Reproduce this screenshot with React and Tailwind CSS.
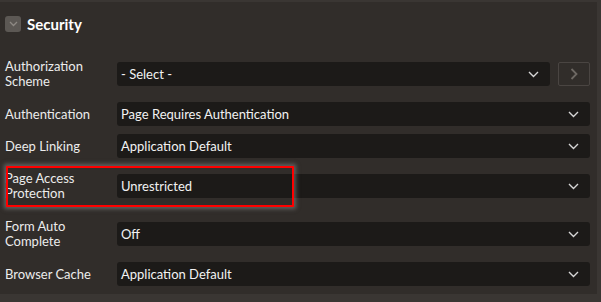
import React from 'react';

const ChevronDown = ({ className = '' }) => (
  <svg width="11" height="7" viewBox="0 0 11 7" className={className} fill="none">
    <path d="M1 1l4.5 4.5L10 1" stroke="currentColor" strokeWidth="1.4" />
  </svg>
);

const ChevronRight = () => (
  <svg width="8" height="12" viewBox="0 0 8 12" fill="none">
    <path d="M1.5 1l5 5-5 5" stroke="currentColor" strokeWidth="1.8" />
  </svg>
);

const Select = ({ value }) => (
  <div className="flex-1 h-6 bg-[#1c1a18] rounded-[3px] flex items-center justify-between pl-1 pr-[11px]">
    <span className="text-[13px] text-[#f2f2f2] leading-none">{value}</span>
    <ChevronDown className="text-[#d6d6d6]" />
  </div>
);

const Row = ({ label, value, className = '', link }) => (
  <div className={`flex items-center h-8 ${className}`}>
    <div className="w-[117px] shrink-0 pl-[5px] text-[13px] leading-[15px] text-[#ececec]">{label}</div>
    <Select value={value} />
    {link && (
      <button className="ml-2 w-8 h-6 border border-[#4a4542] rounded-[2px] flex items-center justify-center text-[#6e6964]">
        <ChevronRight />
      </button>
    )}
  </div>
);

export default function App() {
  return (
    <div className="w-[601px] h-[302px] bg-[#3a3633] flex flex-col" style={{ fontFamily: 'Lato, "Noto Sans", sans-serif' }}>
      <div className="flex flex-1">
        <div className="flex-1 mt-[2px] bg-[#312d2a] pr-[7px] relative">
          <div className="flex items-center h-4 mt-[14px] pl-[5px]">
            <div className="w-4 h-4 rounded-[3px] bg-[#5c5854] flex items-center justify-center text-[#8e8984]">
              <svg width="9" height="6" viewBox="0 0 9 6" fill="none">
                <path d="M1 1l3.5 3.5L8 1" stroke="currentColor" strokeWidth="1.3" />
              </svg>
            </div>
            <span className="ml-[6px] text-[15px] font-bold text-white">Security</span>
          </div>

          <div className="flex flex-col mt-[26px]">
            <Row label={<>Authorization<br />Scheme</>} value="- Select -" link />
            <Row label="Authentication" value="Page Requires Authentication" className="mt-2" />
            <Row label="Deep Linking" value="Application Default" />
            <Row label={<>Page Access<br />Protection</>} value="Unrestricted" className="mt-2" />
            <Row label={<>Form Auto<br />Complete</>} value="Off" className="mt-4" />
            <Row label="Browser Cache" value="Application Default" className="mt-2" />
          </div>

          <div className="absolute left-[6px] top-[164px] w-[288px] h-[41px] border-2 border-[#ff0000] shadow-[0_0_4px_2px_rgba(140,140,140,0.55)]" />
        </div>
        <div className="w-1 bg-[#3a3633]" />
      </div>
      <div className="h-2 bg-[#3a3633]" />
    </div>
  );
}
